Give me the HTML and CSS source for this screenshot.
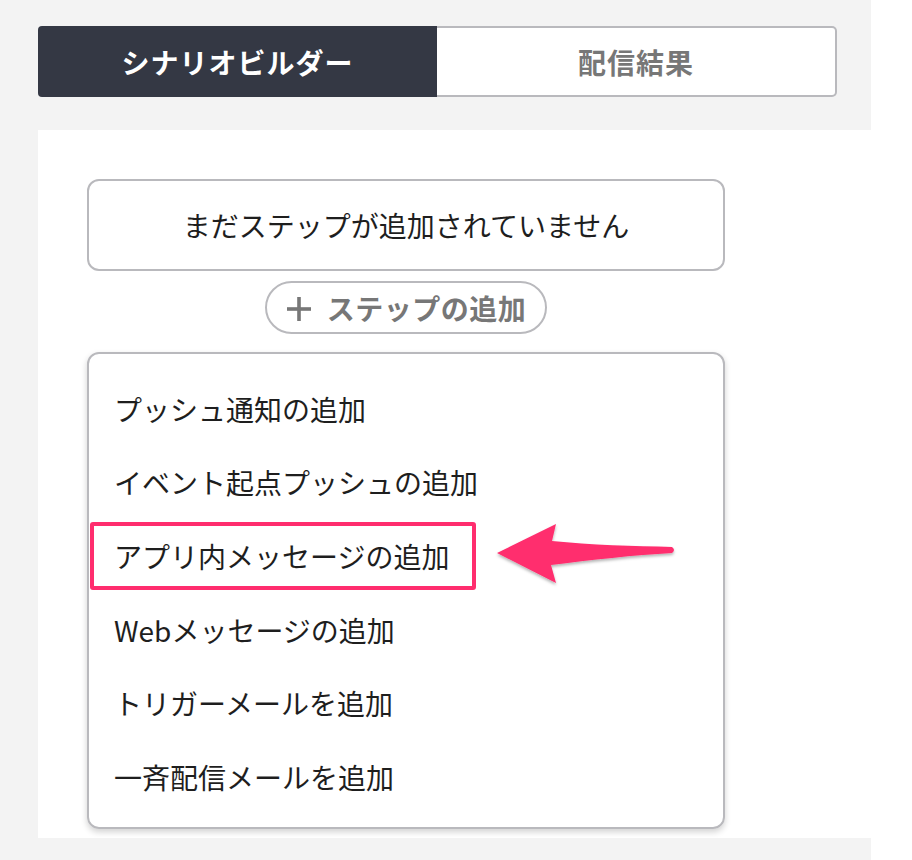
FILE: index.html
```html
<!DOCTYPE html>
<html lang="ja">
<head>
<meta charset="utf-8">
<title>シナリオビルダー</title>
<link rel="stylesheet" href="styles.css">
</head>
<body>
<div class="page">
  <div class="tabs">
    <div class="tab tab-active">シナリオビルダー</div>
    <div class="tab tab-inactive">配信結果</div>
  </div>
  <div class="panel">
    <div class="empty-box">まだステップが追加されていません</div>
    <div class="add-row">
      <button class="add-btn" type="button">
        <svg class="plus" width="26" height="26" viewBox="0 0 26 26" aria-hidden="true">
          <rect x="11.2" y="1" width="3.6" height="24" fill="#777"/>
          <rect x="1" y="11.2" width="24" height="3.6" fill="#777"/>
        </svg>
        <span>ステップの追加</span>
      </button>
    </div>
    <div class="menu">
      <div class="menu-item">プッシュ通知の追加</div>
      <div class="menu-item">イベント起点プッシュの追加</div>
      <div class="menu-item menu-item-marked">アプリ内メッセージの追加
        <span class="highlight"></span>
      </div>
      <div class="menu-item">Webメッセージの追加</div>
      <div class="menu-item">トリガーメールを追加</div>
      <div class="menu-item">一斉配信メールを追加</div>
    </div>
    <svg class="arrow" width="200" height="80" viewBox="0 0 200 80" aria-hidden="true">
      <defs>
        <filter id="sh" x="-20%" y="-40%" width="140%" height="180%">
          <feDropShadow dx="0" dy="2" stdDeviation="1.5" flood-color="#000" flood-opacity="0.3"/>
        </filter>
      </defs>
      <path filter="url(#sh)" fill="#ff2d6e" d="M7 43 L66 14 L62 31 C100 35 145 36 182 37 Q186 40 182 43 C145 45 100 50 61 55 L66 73 Z"/>
    </svg>
  </div>
</div>
</body>
</html>
```
FILE: styles.css
```css
html, body {
  margin: 0;
  padding: 0;
  background: #ffffff;
}
body {
  font-family: "Noto Sans CJK JP", "Noto Sans", sans-serif;
  color: #1e1e1e;
}
.page {
  width: 871px;
  background: #f3f3f3;
  padding: 26px 0 22px 38px;
  box-sizing: border-box;
}
.tabs {
  display: flex;
  width: 799px;
  height: 71px;
}
.tab {
  display: flex;
  align-items: center;
  justify-content: center;
  font-size: 28px;
  font-weight: bold;
  letter-spacing: 1px;
  box-sizing: border-box;
}
.tab-active {
  width: 399px;
  background: #343844;
  color: #ffffff;
  border-radius: 4px 0 0 4px;
}
.tab-inactive {
  width: 400px;
  background: #ffffff;
  color: #777777;
  border: 2px solid #b9b9bd;
  border-left: none;
  border-radius: 0 5px 5px 0;
}
.panel {
  position: relative;
  margin-top: 33px;
  height: 708px;
  background: #ffffff;
  padding: 49px 0 0 49px;
  box-sizing: border-box;
}
.empty-box {
  width: 638px;
  height: 92px;
  box-sizing: border-box;
  border: 2px solid #b9b9bd;
  border-radius: 12px;
  display: flex;
  align-items: center;
  justify-content: center;
  font-size: 28px;
}
.add-row {
  width: 638px;
  display: flex;
  justify-content: center;
  margin-top: 10px;
}
.add-btn {
  height: 53px;
  box-sizing: border-box;
  border: 2px solid #b9b9bd;
  border-radius: 27px;
  background: #ffffff;
  padding: 0 19px 0 19px;
  display: flex;
  align-items: center;
  gap: 15px;
  font-family: inherit;
  font-size: 28px;
  font-weight: bold;
  color: #777777;
  letter-spacing: 0.5px;
}
.plus {
  display: block;
  margin-top: 2px;
}
.menu {
  margin-top: 18px;
  width: 638px;
  height: 477px;
  box-sizing: border-box;
  border: 2px solid #b9b9bd;
  border-radius: 12px;
  box-shadow: 0 3px 6px rgba(0, 0, 0, 0.18);
  padding: 18px 0 0 0;
}
.menu-item {
  position: relative;
  height: 73.6px;
  display: flex;
  align-items: center;
  padding-left: 25px;
  font-size: 28px;
}
.highlight {
  position: absolute;
  left: 1px;
  top: 3px;
  width: 386px;
  height: 68px;
  box-sizing: border-box;
  border: 4px solid #ff2d6e;
  border-radius: 3px;
}
.arrow {
  position: absolute;
  left: 452px;
  top: 380px;
}
```
